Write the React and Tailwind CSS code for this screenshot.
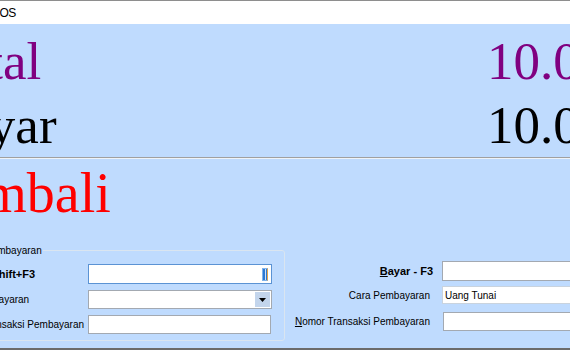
import React from "react";

const BigRow = ({ label, value, className, labelClass }) => (
  <div className={`flex h-[64px] leading-[64px] whitespace-nowrap ${className}`}>
    <span className={`shrink-0 ${labelClass}`}>{label}</span>
    <span>{value}</span>
  </div>
);

const TextBox = ({ className, children }) => (
  <div
    className={`flex items-center bg-white border border-[#a3a9b1] px-[2px] text-[10px] ${className}`}
  >
    {children}
  </div>
);

const App = () => {
  return (
    <div className="w-[570px] h-[350px] overflow-hidden bg-white font-['Liberation_Sans',Arial,sans-serif] text-black">
      {/* title bar */}
      <div className="h-[24px] border-t border-[#8e8e8e] flex items-center text-[12px]">
        <span className="-ml-[8px] tracking-[-0.5px]">POS</span>
      </div>

      <div className="h-[326px] bg-[#bfdbfe] border-b-2 border-[#6b6b6b] overflow-hidden">
        <div className="pt-[5px] font-['Liberation_Serif','Times_New_Roman',serif]">
          <BigRow
            label="Total"
            value="10.000"
            className="text-[53px] text-[#800080]"
            labelClass="-ml-[67px] w-[554px]"
          />
          <BigRow
            label="Bayar"
            value="10.000"
            className="text-[53px] text-black"
            labelClass="-ml-[70px] w-[557px]"
          />
        </div>

        {/* separator */}
        <div className="h-[2px] border-t border-[#a0a0a0] border-b border-b-[#eef3f9]" />

        <div className="mt-[2px] font-['Liberation_Serif','Times_New_Roman',serif]">
          <BigRow
            label="Kembali"
            value=""
            className="text-[56px] text-[#ff0000]"
            labelClass="-ml-[82px]"
          />
        </div>

        {/* payment area */}
        <div className="mt-[19px] flex h-[97px] text-[10px]">
          <fieldset className="-ml-[60px] w-[345px] h-[97px] shrink-0 border border-[#dae5f0] rounded-[3px] p-0">
            <legend className="ml-[43px] px-[1px] leading-[13px]">Pembayaran</legend>
            <div className="pl-[7px] mt-[7px] flex flex-col">
              <div className="flex items-center h-[20px]">
                <span className="w-[140px] shrink-0 font-bold text-[11px] pl-[3px]">Bayar - Shift+F3</span>
                <div className="w-[184px] h-[20px] bg-white border border-[#5b93d4] flex items-center justify-end pr-[3px]">
                  <span className="w-[6px] h-[13px] bg-[#2d78d2] border border-[#7fb2ea] border-r-[#e2a24a] flex justify-center">
                    <span className="w-[1px] h-full bg-[#cfe3fa]" />
                  </span>
                </div>
              </div>
              <div className="flex items-center h-[19px] mt-[6px]">
                <span className="w-[140px] shrink-0">Cara Pembayaran</span>
                <div className="w-[184px] h-[19px] bg-white border border-[#a3a9b1] flex justify-end items-center pr-[1px]">
                  <span className="w-[15px] h-[15px] bg-[#c3d5ec] flex items-center justify-center">
                    <svg width="7" height="4" viewBox="0 0 7 4">
                      <path d="M0 0h7L3.5 4z" fill="#000" />
                    </svg>
                  </span>
                </div>
              </div>
              <div className="flex items-center h-[19px] mt-[6px]">
                <span className="w-[140px] shrink-0 pl-[1px]">Nomor Transaksi Pembayaran</span>
                <TextBox className="w-[183px] h-[19px]" />
              </div>
            </div>
          </fieldset>

          <div className="flex flex-col pt-[17px]">
            <div className="flex items-center h-[20px]">
              <span className="w-[148px] text-right font-bold text-[11px]">
                <span className="underline">B</span>ayar - F3
              </span>
              <TextBox className="ml-[9px] w-[140px] h-[20px]" />
            </div>
            <div className="flex items-center h-[18px] mt-[5px]">
              <span className="w-[145px] text-right">Cara Pembayaran</span>
              <TextBox className="ml-[12px] w-[140px] h-[18px] border-[#c9d3de]">Uang Tunai</TextBox>
            </div>
            <div className="flex items-center h-[19px] mt-[8px]">
              <span className="w-[145px] text-right">
                <span className="underline">N</span>omor Transaksi Pembayaran
              </span>
              <TextBox className="ml-[13px] w-[140px] h-[19px]" />
            </div>
          </div>
        </div>
      </div>
    </div>
  );
};

export default App;
